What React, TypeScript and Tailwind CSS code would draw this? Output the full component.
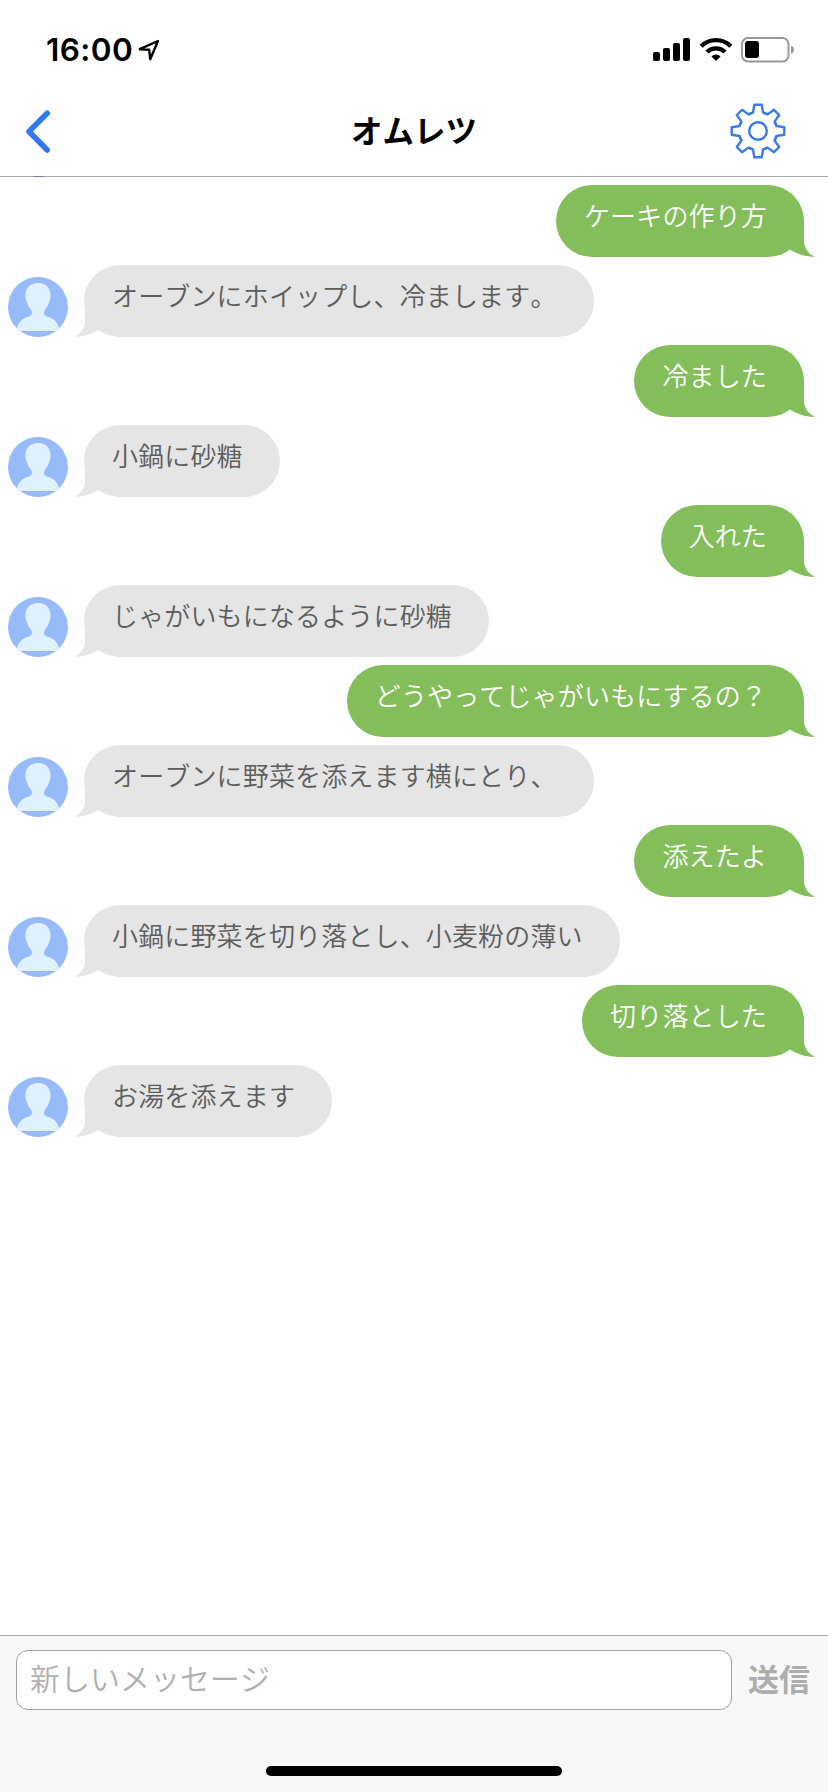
import React, { useState } from "react";

type Message = {
  id: number;
  text: string;
  mine: boolean;
};

const messages: Message[] = [
  { id: 1, text: "ケーキの作り方", mine: true },
  { id: 2, text: "オーブンにホイップし、冷まします。", mine: false },
  { id: 3, text: "冷ました", mine: true },
  { id: 4, text: "小鍋に砂糖", mine: false },
  { id: 5, text: "入れた", mine: true },
  { id: 6, text: "じゃがいもになるように砂糖", mine: false },
  { id: 7, text: "どうやってじゃがいもにするの？", mine: true },
  { id: 8, text: "オーブンに野菜を添えます横にとり、", mine: false },
  { id: 9, text: "添えたよ", mine: true },
  { id: 10, text: "小鍋に野菜を切り落とし、小麦粉の薄い", mine: false },
  { id: 11, text: "切り落とした", mine: true },
  { id: 12, text: "お湯を添えます", mine: false },
];

const StatusBar = () => {
  return (
    <div className="h-[88px] pt-[33px] pl-[46px] pr-[33px] flex flex-row items-start justify-between">
      <div className="flex flex-row items-center h-[33px]">
        <span className="font-['Inter'] font-semibold text-[31.5px] leading-[33px] tracking-[0.4px]">
          16:00
        </span>
        <svg className="ml-[5px]" width="22" height="22" viewBox="0 0 22 22">
          <path
            d="M20 2 L1.8 10.2 L11.2 10.8 L12.2 20.2 Z"
            fill="none"
            stroke="#000"
            strokeWidth="2.4"
            strokeLinejoin="round"
          />
        </svg>
      </div>
      <div className="flex flex-row items-start pt-1">
        <svg width="38" height="24" viewBox="0 0 38 24">
          <rect x="0" y="15" width="7" height="9" rx="2" />
          <rect x="10" y="11" width="7" height="13" rx="2" />
          <rect x="20" y="6" width="7" height="18" rx="2" />
          <rect x="30" y="1" width="7" height="23" rx="2" />
        </svg>
        <svg className="ml-[8px]" width="34" height="24" viewBox="0 0 34 24">
          <g fill="none" stroke="#000" strokeWidth="4.4">
            <path d="M2.2 9.2 A21 21 0 0 1 31.8 9.2" />
            <path d="M8 15 A12.9 12.9 0 0 1 26 15" />
          </g>
          <path d="M17 24 L12.4 19.4 A6.5 6.5 0 0 1 21.6 19.4 Z" />
        </svg>
        <svg className="ml-[8px]" width="54" height="26" viewBox="0 0 54 26">
          <rect
            x="1"
            y="1"
            width="46.5"
            height="23.5"
            rx="6"
            fill="none"
            stroke="#999"
            strokeWidth="2"
          />
          <rect x="4" y="4" width="14" height="17" rx="3" />
          <path d="M50 8.5 C54 10 54 15.5 50 17 Z" fill="#999" />
        </svg>
      </div>
    </div>
  );
};

const GearIcon = () => {
  const tooth =
    "M-9.6 -16.6 L-5 -18.5 L-3.7 -26.3 L3.7 -26.3 L5 -18.5 L9.6 -16.6";
  return (
    <svg width="58" height="58" viewBox="-29 -29 58 58">
      <g fill="none" stroke="#3b7be8" strokeWidth="2.4" strokeLinejoin="round">
        {[0, 45, 90, 135, 180, 225, 270, 315].map((deg) => (
          <path key={deg} d={tooth} transform={`rotate(${deg})`} />
        ))}
        <circle r="8.8" />
      </g>
    </svg>
  );
};

const Header = () => {
  return (
    <div className="relative h-[89px] pb-[2px] border-b border-[#a8a8ac] grid grid-cols-3 items-center">
      <svg className="ml-6" width="30" height="46" viewBox="0 0 30 46">
        <path
          d="M23.2 5.2 L5 23.5 L23.2 42"
          fill="none"
          stroke="#3478f0"
          strokeWidth="5.6"
          strokeLinecap="round"
          strokeLinejoin="round"
        />
      </svg>
      <h1 className="text-center font-bold text-[31.5px] leading-none pb-[2px]">
        オムレツ
      </h1>
      <div className="flex justify-end pr-[41px]">
        <GearIcon />
      </div>
      {/* bottom edge of the previous avatar, scrolled under the header */}
      <div className="absolute left-[33px] -bottom-px w-[11px] h-px bg-[#7d7da8]"></div>
    </div>
  );
};

const Avatar = () => {
  return (
    <svg className="ml-2" width="60" height="60" viewBox="0 0 60 60">
      <circle cx="30" cy="30" r="30" fill="#97bbf9" />
      <path
        d="M8.500 54 C9 46 14 41.500 21 39.500 C24 38.500 24.500 36 23.500 33.500 C20 29 18 25 17.500 20 C17 11 22 6 30 6 C38 6 43 11 42.500 20 C42 25 40 29 36.500 33.500 C35.500 36 36 38.500 39 39.500 C46 41.500 51 46 51.500 54 Z"
        fill="#dff1fe"
      />
    </svg>
  );
};

const Bubble = ({ message }: { message: Message }) => {
  return (
    <div
      className={`${
        message.mine
          ? "bg-[#84be5b] text-white mr-6 font-[350]"
          : "bg-[#e5e5e5] text-[#5c5c5c] ml-4 font-[350]"
      } relative h-[72px] rounded-[36px] pl-7 pr-[37px] pt-[12px] text-[26px] leading-[36px] tracking-[0.15px] whitespace-nowrap`}
    >
      {message.text}
      <svg
        className={`${
          message.mine ? "-right-[11px]" : "-left-[10px] -scale-x-100"
        } absolute bottom-0`}
        width="36"
        height="36"
        viewBox="0 0 36 36"
      >
        <path
          d="M0 0 H25 V20 C25 26 29 33 36 35.700 C27 36 18 33 11.300 28.700 Z"
          fill={message.mine ? "#84be5b" : "#e5e5e5"}
        />
      </svg>
    </div>
  );
};

const MessageRow = ({ message }: { message: Message }) => {
  return (
    <div
      className={`${
        message.mine ? "justify-end" : "justify-start"
      } flex flex-row items-end h-[72px]`}
    >
      {!message.mine && <Avatar />}
      <Bubble message={message} />
    </div>
  );
};

const MessageInput = () => {
  const [text, setText] = useState("");

  return (
    <div className="h-[157px] bg-[#f8f8f8] border-t border-[#a8a8a8] flex flex-col items-center justify-between">
      <div className="w-full flex flex-row items-start pt-[14px] pl-4 pr-[17px]">
        <input
          value={text}
          onChange={(e) => setText(e.target.value)}
          placeholder="新しいメッセージ"
          className="w-[716px] h-[60px] px-[13px] pb-[6px] bg-white border border-[#a0a0a0] rounded-[12px] text-[30px] font-[350] outline-none placeholder:text-[#b0b0b0]"
        />
        <button className="ml-4 text-[31px] leading-[55px] font-bold text-[#adadad] whitespace-nowrap">
          送信
        </button>
      </div>
      <div className="w-[296px] h-[10px] mb-4 rounded-full bg-black"></div>
    </div>
  );
};

const App = () => {
  return (
    <div
      lang="ja"
      className="w-[828px] h-[1792px] flex flex-col bg-white text-black overflow-hidden font-['Noto_Sans_CJK_JP',sans-serif] [font-kerning:none]"
    >
      <StatusBar />
      <Header />
      <div className="flex-1 flex flex-col gap-2 pt-2">
        {messages.map((message) => (
          <MessageRow key={message.id} message={message} />
        ))}
      </div>
      <MessageInput />
    </div>
  );
};

export default App;
